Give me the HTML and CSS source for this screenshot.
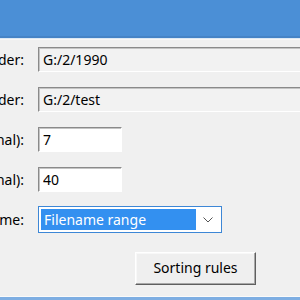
FILE: index.html
```html
<!DOCTYPE html>
<html lang="en">
<head>
  <meta charset="UTF-8" />
  <meta name="viewport" content="width=device-width, initial-scale=1.0"/>
  <title>Photo Sorter - Settings</title>
  <link rel="stylesheet" href="styles.css">
</head>
<body>
  <div class="titlebar"></div>

  <section class="dialog">
    <div class="form">
      <label class="lbl" for="src">Source folder:</label>
      <input type="text" id="src" class="field wide readonly" value="G:/2/1990" readonly />

      <label class="lbl" for="dst">Target folder:</label>
      <input type="text" id="dst" class="field wide readonly" value="G:/2/test" readonly />

      <label class="lbl" for="min">Min. depth (optional):</label>
      <input type="text" id="min" class="field short" value="7" />

      <label class="lbl" for="max">Max. depth (optional):</label>
      <input type="text" id="max" class="field short" value="40" />

      <label class="lbl" for="scheme">Sorting scheme:</label>
      <div class="select" id="scheme">
        <span class="select-value">Filename range</span>
        <span class="select-arrow">
          <svg width="10" height="6" viewBox="0 0 10 6"><path d="M0.5 0.5 L5 5 L9.5 0.5" fill="none" stroke="#555" stroke-width="1"/></svg>
        </span>
      </div>

      <span></span>
      <button type="button" class="btn">Sorting rules</button>
    </div>
  </section>

  <div class="frame-bottom"></div>
</body>
</html>
```

FILE: styles.css
```css
html, body {
  height: 100%;
}
body {
  font-family: 'Noto Sans', 'Open Sans', sans-serif;
  font-size: 14px;
  margin: 0;
  padding: 0;
  background: #f0f0f0;
  color: #000;
  overflow: hidden;
  display: flex;
  flex-direction: column;
}
.titlebar {
  height: 36px;
  background: #4b8fd6;
  border-bottom: 2px solid #4583c6;
  box-shadow: 0 1px 0 #dce8f4, 0 2px 0 #f6f6f6;
  flex-shrink: 0;
}
.dialog {
  flex: 1;
  padding-top: 9px;
  margin-left: -176px;
}
.form {
  display: grid;
  grid-template-columns: 200px 1fr;
  grid-auto-rows: 25px;
  column-gap: 14px;
  row-gap: 15px;
  align-items: center;
}
.lbl {
  text-align: right;
  white-space: nowrap;
}
.field {
  box-sizing: border-box;
  height: 25px;
  margin: 0;
  padding: 0 4px 1px;
  font: inherit;
  color: #000;
  background: #fff;
  border: 1px solid;
  border-color: #8a8a8a #fff #fff #8a8a8a;
  box-shadow: inset 1px 1px 0 #c4c4c4;
  outline: none;
}
.field.readonly {
  background: #f2f2f2;
}
.field.wide {
  width: 400px;
}
.field.short {
  width: 84px;
}
.select {
  box-sizing: border-box;
  width: 184px;
  height: 27px;
  display: flex;
  align-items: stretch;
  padding: 2px;
  background: #fff;
  border: 1px solid #3d87d6;
}
.select-value {
  flex: 1;
  background: #3390f0;
  color: #fff;
  padding: 0 3px;
  line-height: 22px;
}
.select-arrow {
  width: 23px;
  display: flex;
  align-items: center;
  justify-content: center;
}
.btn {
  justify-self: start;
  align-self: start;
  margin: 5px 0 0 97px;
  box-sizing: border-box;
  width: 121px;
  height: 33px;
  font: inherit;
  color: #000;
  background: #efefef;
  border: 1px solid;
  border-color: #fff #5f5f5f #5f5f5f #fff;
  box-shadow: inset -1px -1px 0 #a8a8a8, inset 1px 1px 0 #f8f8f8;
  padding: 0 0 2px;
}
.frame-bottom {
  height: 3px;
  background: #7eaee2;
  border-top: 1px solid #fafafa;
  flex-shrink: 0;
}
```
